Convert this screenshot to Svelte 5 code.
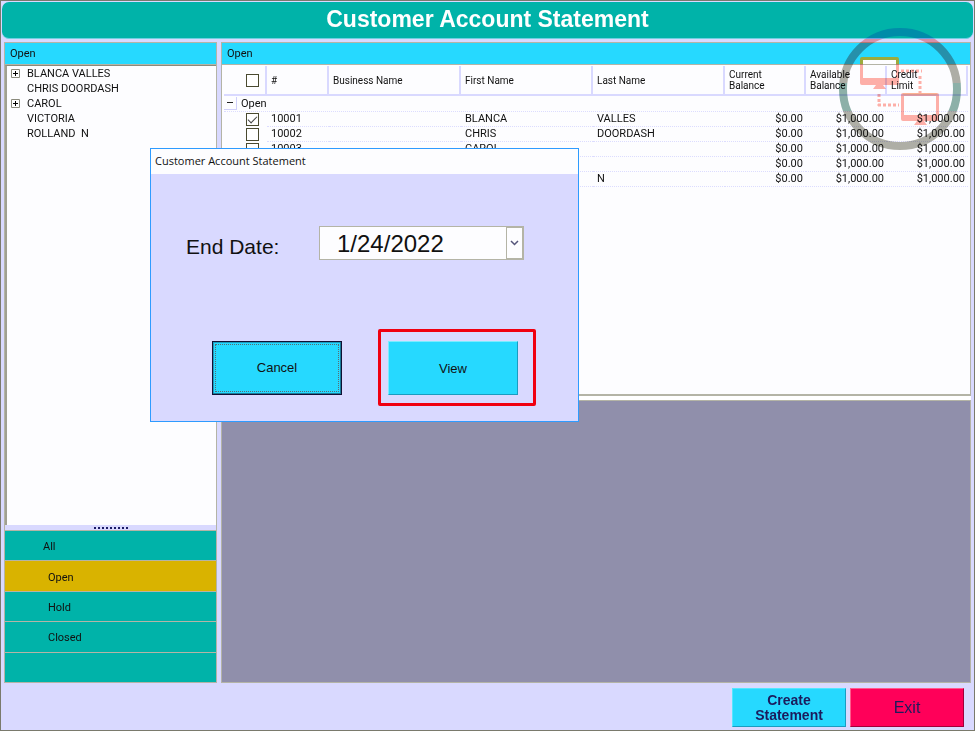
<script lang="ts">
	interface Customer {
		id: number;
		first: string;
		last: string;
		expandable: boolean;
		checked: boolean;
	}

	let customers = $state<Customer[]>([
		{ id: 10001, first: 'BLANCA', last: 'VALLES', expandable: true, checked: true },
		{ id: 10002, first: 'CHRIS', last: 'DOORDASH', expandable: false, checked: false },
		{ id: 10003, first: 'CAROL', last: '', expandable: true, checked: false },
		{ id: 10004, first: 'VICTORIA', last: '', expandable: false, checked: false },
		{ id: 10005, first: 'ROLLAND ', last: 'N', expandable: false, checked: false }
	]);

	const filters = ['All', 'Open', 'Hold', 'Closed'];
	let active = $state('Open');
	let endDate = $state('1/24/2022');
	let showDialog = $state(true);
	let groupOpen = $state(true);
	let allChecked = $derived(customers.every((c) => c.checked));

	function toggleAll() {
		const next = !allChecked;
		customers.forEach((c) => (c.checked = next));
	}
</script>

<div class="window">
	<h1 class="title">Customer Account Statement</h1>

	<main class="main">
		<aside class="side">
			<h2 class="panel-title">Open</h2>
			<ul class="tree">
				{#each customers as c (c.id)}
					<li>
						{#if c.expandable}
							<button class="expander" aria-label="Expand {c.first}">
								<svg viewBox="0 0 9 9" width="9" height="9">
									<path d="M0.5 0.5h8v8h-8z" fill="#fff" stroke="#8a8a7c" />
									<path d="M2 4.5h5M4.5 2v5" stroke="#000" />
								</svg>
							</button>
						{:else}
							<span class="expander"></span>
						{/if}
						<span class="tree-name">{c.first} {c.last}</span>
					</li>
				{/each}
			</ul>
			<div class="grip">
				<svg viewBox="0 0 34 2" width="34" height="2">
					<path d="M0 1h34" stroke="#1b1b66" stroke-width="2" stroke-dasharray="2 2" />
				</svg>
			</div>
			<nav class="filters">
				{#each filters as name}
					<button class:active={active === name} class:top={name === 'All'} onclick={() => (active = name)}>{name}</button>
				{/each}
				<div class="filler"></div>
			</nav>
		</aside>

		<section class="content">
			<div class="grid-panel">
				<h2 class="panel-title">Open</h2>
				<div class="grid-wrap">
					<table>
						<colgroup>
							<col class="c-check" /><col class="c-id" /><col /><col /><col />
							<col class="c-money" /><col class="c-money" /><col class="c-money" />
						</colgroup>
						<thead>
							<tr>
								<th class="check"><input type="checkbox" aria-label="Select all" checked={allChecked} onchange={toggleAll} /></th>
								<th>#</th>
								<th>Business Name</th>
								<th>First Name</th>
								<th>Last Name</th>
								<th>Current<br />Balance</th>
								<th>Available<br />Balance</th>
								<th>Credit<br />Limit</th>
							</tr>
						</thead>
						<tbody>
							<tr class="group">
								<td colspan="8">
									<div class="group-cell">
										<button class="collapse" aria-label="Collapse group" onclick={() => (groupOpen = !groupOpen)}>
											<svg viewBox="0 0 6 2" width="6" height="2"><path d="M0 0.5h6" stroke="#222" /></svg>
										</button>
										<span class="group-name">Open</span>
									</div>
								</td>
							</tr>
							{#if groupOpen}
								{#each customers as c (c.id)}
									<tr>
										<td class="check"><input type="checkbox" aria-label="Select {c.id}" bind:checked={c.checked} /></td>
										<td>{c.id}</td>
										<td></td>
										<td>{c.first}</td>
										<td>{c.last}</td>
										<td class="money">$0.00</td>
										<td class="money">$1,000.00</td>
										<td class="money">$1,000.00</td>
									</tr>
								{/each}
							{/if}
						</tbody>
					</table>
				</div>
			</div>
			<div class="preview"></div>
		</section>
	</main>

	<footer class="footer">
		<button class="btn create" onclick={() => (showDialog = true)}>Create<br />Statement</button>
		<button class="btn exit">Exit</button>
	</footer>

	<svg class="mark tint" viewBox="0 0 122 122" width="122" height="122" aria-hidden="true">
		<defs>
			<linearGradient id="ring" gradientUnits="userSpaceOnUse" x1="0" y1="0" x2="0" y2="122">
				<stop offset="0.09" stop-color="#ffc7ff" />
				<stop offset="0.09" stop-color="#ffa9aa" />
				<stop offset="0.295" stop-color="#ffa9aa" />
				<stop offset="0.295" stop-color="#b0b0a6" />
				<stop offset="0.45" stop-color="#b0b0a6" />
				<stop offset="0.45" stop-color="#8db2a8" />
				<stop offset="0.68" stop-color="#8db2a8" />
				<stop offset="0.68" stop-color="#b0b0a6" />
			</linearGradient>
		</defs>
		<circle cx="61" cy="61" r="57" fill="none" stroke="url(#ring)" stroke-width="8" />
		<g fill="#ffb1a8">
			<path d="M21 36h3v14h33V36h3v19q0 2-2 2H23q-2 0-2-2z" />
			<path d="M37 57h7l3 4H34z" />
			<path fill-rule="evenodd" d="M64 65h34q2 0 2 2v24q0 2-2 2H64q-2 0-2-2V67q0-2 2-2zM65 68v19h32V68z" />
			<path d="M78 93h7l3 4H75z" />
		</g>
		<path d="M64 66h34" stroke="#ffb57e" />
		<g fill="none" stroke="#ffb1a8" stroke-width="3" stroke-dasharray="3 2">
			<path d="M62 43h21" />
			<path d="M81 48v17" />
			<path d="M40 66v12M39 77h21" />
		</g>
	</svg>
	<svg class="mark" viewBox="0 0 122 122" width="122" height="122" aria-hidden="true">
		<path d="M24 32h33v4H24z" fill="#fdfdff" />
		<path d="M21 36v-5q0-2 2-2h35q2 0 2 2v5h-3v-4H24v4z" fill="#9cab3c" />
	</svg>

	{#if showDialog}
		<div class="dialog" role="dialog" aria-labelledby="dialog-title">
			<h2 class="dialog-title" id="dialog-title">Customer Account Statement</h2>
			<div class="field">
				<label for="end-date">End Date:</label>
				<div class="date">
					<input id="end-date" type="text" bind:value={endDate} />
					<button aria-label="Open calendar">
						<svg viewBox="0 0 9 6" width="9" height="6">
							<path d="M1 1l3.5 3.5L8 1" fill="none" stroke="#55557a" stroke-width="1.5" />
						</svg>
					</button>
				</div>
			</div>
			<div class="actions">
				<button class="action cancel" onclick={() => (showDialog = false)}><span>Cancel</span></button>
				<div class="highlight">
					<button class="action">View</button>
				</div>
			</div>
		</div>
	{/if}
</div>

<style>
	:global(body) {
		margin: 0;
	}

	.window {
		position: relative;
		display: flex;
		flex-direction: column;
		min-height: 100vh;
		box-sizing: border-box;
		border: 1px solid #7a7a6c;
		background: #d9d9ff;
		font-family: Roboto, 'Liberation Sans', sans-serif;
		font-size: 11px;
		color: #111;
	}

	.window * {
		box-sizing: border-box;
	}

	h1,
	h2,
	ul {
		margin: 0;
		padding: 0;
		font-weight: 400;
	}

	button,
	input {
		margin: 0;
		padding: 0;
		font: inherit;
		color: inherit;
		border-radius: 0;
	}

	.title {
		margin: 1px;
		height: 37px;
		border-radius: 7px;
		border-bottom: 1px solid #6fd0e0;
		background: #00b3a9;
		color: #fff;
		font-family: 'Liberation Sans', sans-serif;
		font-size: 23px;
		font-weight: 700;
		line-height: 35px;
		text-align: center;
	}

	.main {
		flex: 1;
		display: flex;
		gap: 4px;
		margin: 2px 3px 0;
	}

	.panel-title {
		height: 22px;
		padding-left: 5px;
		border-bottom: 1px solid #b4b4a6;
		background: #26d9ff;
		font-size: 11px;
		line-height: 22px;
	}

	.side {
		flex: 0 0 213px;
		display: flex;
		flex-direction: column;
		border: 1px solid #b4b4a6;
		border-bottom: none;
	}

	.tree {
		flex: 1;
		list-style: none;
		border-top: 1px solid #8a8a7c;
		border-left: 2px solid #a0a092;
		background: #fdfdff;
	}

	.tree li {
		display: flex;
		align-items: center;
		height: 15px;
	}

	.expander {
		display: flex;
		width: 9px;
		height: 9px;
		margin: 0 7px 0 4px;
		border: none;
		background: none;
	}

	.tree-name {
		white-space: pre;
	}

	.grip {
		display: flex;
		justify-content: center;
		align-items: center;
		height: 5px;
	}

	.filters {
		display: flex;
		flex-direction: column;
		height: 153px;
		border-top: 1px solid #b4b4a6;
	}

	.filters button,
	.filler {
		flex: 1;
		padding: 2px 0 0 43px;
		border: none;
		border-bottom: 1px solid #b4b4a6;
		background: #00b3a9;
		text-align: left;
	}

	.filters .top {
		padding-left: 38px;
	}

	.filters .active {
		background: #d9b300;
	}

	.content {
		flex: 1;
		display: flex;
		flex-direction: column;
		gap: 4px;
		border-left: 1px solid #b4b4a6;
		background: #fff;
	}

	.grid-panel {
		flex: 5 0 0;
		border: 1px solid #b4b4a6;
		border-left: none;
		border-bottom: 2px solid #b4b4a6;
		background: #fdfdff;
	}

	.grid-wrap {
		padding: 1px 2px 0;
	}

	.preview {
		flex: 4 0 0;
		border: 1px solid #b4b4a6;
		border-left: none;
		background: #908fab;
	}

	table {
		width: 100%;
		table-layout: fixed;
		border-collapse: separate;
		border-spacing: 0;
	}

	.c-check {
		width: 43px;
	}

	.c-id {
		width: 62px;
	}

	.c-money {
		width: 81px;
	}

	th {
		height: 30px;
		padding: 0 4px;
		border-right: 2px solid #d9d9ff;
		border-bottom: 2px solid #d9d9ff;
		font-size: 10px;
		font-weight: 400;
		line-height: 11px;
		text-align: left;
	}

	td {
		height: 15px;
		padding: 0 4px;
		border-bottom: 1px dotted #dcdcff;
		line-height: 14px;
		white-space: nowrap;
	}

	td.check {
		border-bottom: none;
	}

	.check {
		padding: 0 8px 0 0;
		text-align: right;
	}

	th.check {
		padding-right: 6px;
	}

	.check input {
		display: block;
		position: relative;
		appearance: none;
		width: 13px;
		height: 13px;
		margin-left: auto;
		border: 1px solid #4a4a30;
		background: #fff;
	}

	.check input:checked::after {
		content: '';
		position: absolute;
		left: 3px;
		top: 0;
		width: 4px;
		height: 8px;
		border: solid #444;
		border-width: 0 1px 1px 0;
		transform: rotate(45deg);
	}

	.money {
		padding: 0 3px;
		text-align: right;
	}

	.group td {
		height: 16px;
		padding: 0;
	}

	.group-cell {
		display: flex;
		align-items: center;
		gap: 4px;
	}

	.collapse {
		display: flex;
		justify-content: center;
		align-items: center;
		width: 13px;
		height: 13px;
		border: solid #d0d0fa;
		border-width: 0 1px 1px 0;
		background: none;
	}

	.footer {
		display: flex;
		justify-content: flex-end;
		gap: 4px;
		padding: 5px 10px 3px;
	}

	.btn {
		width: 114px;
		height: 39px;
		font-family: 'Liberation Sans', sans-serif;
		color: #1b1b5c;
	}

	.create {
		border: 1px solid #55e6ff;
		border-right-color: #1a9cc0;
		border-bottom-color: #1a9cc0;
		background: #26d9ff;
		font-size: 14px;
		font-weight: 700;
		line-height: 15px;
	}

	.exit {
		border: 1px solid #ff5a8c;
		border-right-color: #a00038;
		border-bottom-color: #a00038;
		background: #ff0059;
		font-size: 16px;
	}

	/* company logo over the top right corner */
	.mark {
		position: absolute;
		top: 27px;
		right: 13px;
		pointer-events: none;
	}

	.tint {
		mix-blend-mode: multiply;
	}

	.dialog {
		position: absolute;
		left: 149px;
		top: 147px;
		width: 429px;
		border: 1px solid #2e9bff;
		background: #d9d9ff;
		font-family: 'Liberation Sans', sans-serif;
		font-size: 13px;
	}

	.dialog-title {
		height: 25px;
		padding-left: 4px;
		background: #fdfdff;
		font-family: 'Open Sans', sans-serif;
		font-size: 11px;
		line-height: 24px;
	}

	.field {
		display: flex;
		align-items: center;
		justify-content: space-between;
		padding: 52px 54px 0 35px;
	}

	.field label {
		padding-top: 7px;
		font-size: 21px;
	}

	.date {
		display: flex;
		width: 205px;
		height: 34px;
		border: 1px solid #b4b4a6;
		background: #fdfdff;
	}

	.date input {
		flex: 1;
		min-width: 0;
		padding: 2px 0 0 17px;
		border: none;
		background: none;
		font-size: 24px;
		outline: none;
	}

	.date button {
		display: flex;
		justify-content: center;
		align-items: center;
		width: 17px;
		border: 1px solid #b4b4a6;
		background: #fdfdff;
	}

	.actions {
		display: flex;
		justify-content: space-between;
		align-items: center;
		padding: 69px 42px 15px 61px;
	}

	.highlight {
		padding: 9px 15px 8px 7px;
		border: 3px solid #f00010;
		border-radius: 2px;
	}

	.action {
		display: block;
		width: 130px;
		height: 54px;
		border: 1px solid #7becff;
		border-right-color: #1a9cc0;
		border-bottom-color: #1a9cc0;
		background: #26d9ff;
	}

	.cancel {
		padding: 2px;
		border: 1px solid #111133;
		box-shadow: inset -1px -1px #1a7c98, inset 1px 1px #1a9cc0;
	}

	.cancel span {
		display: flex;
		align-items: center;
		justify-content: center;
		height: 100%;
		border: 1px dotted #5a6a70;
	}
</style>
